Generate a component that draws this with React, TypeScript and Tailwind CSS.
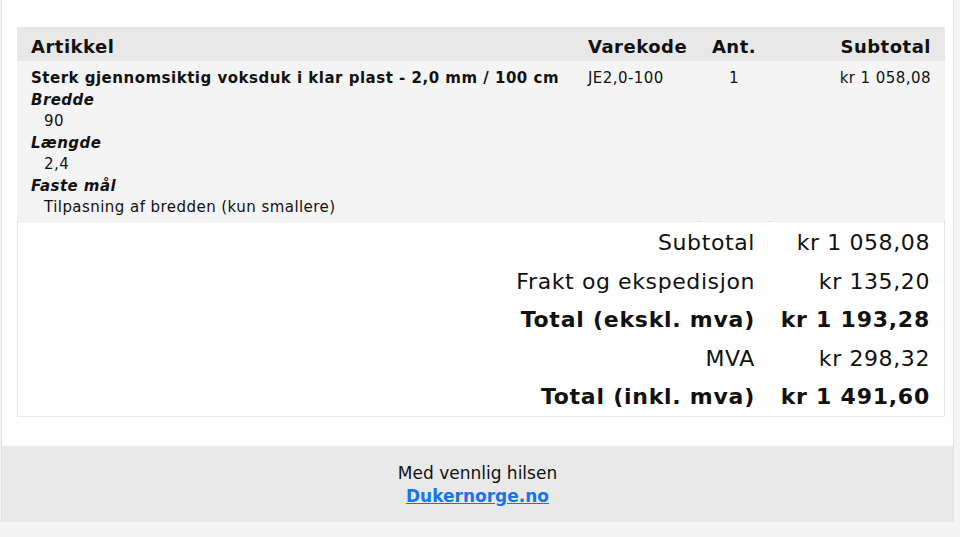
import React from 'react';

const font = { fontFamily: 'Verdana, "DejaVu Sans", sans-serif' };

const options = [
  { name: 'Bredde', value: '90' },
  { name: 'Længde', value: '2,4' },
  { name: 'Faste mål', value: 'Tilpasning af bredden (kun smallere)' },
];

const totals = [
  { label: 'Subtotal', value: 'kr 1 058,08', bold: false },
  { label: 'Frakt og ekspedisjon', value: 'kr 135,20', bold: false },
  { label: 'Total (ekskl. mva)', value: 'kr 1 193,28', bold: true },
  { label: 'MVA', value: 'kr 298,32', bold: false },
  { label: 'Total (inkl. mva)', value: 'kr 1 491,60', bold: true },
];

export default function App() {
  return (
    <div className="min-h-[537px] bg-[#f4f4f4] text-[#111]" style={font}>
      <div className="ml-px w-[953px] border-x border-[#e2e2e2] bg-white">
        <div className="px-[15px] pt-[27px] pb-[29px]">
          <table className="w-[928px] table-fixed border-collapse">
            <colgroup>
              <col className="w-[557px]" />
              <col className="w-[125px]" />
              <col className="w-[70px]" />
              <col className="w-[176px]" />
            </colgroup>
            <thead>
              <tr className="h-[34px] bg-[#e8e8e8] text-[18px] font-bold tracking-[0.5px]">
                <th className="pl-[14px] pt-[5px] text-left">Artikkel</th>
                <th className="pl-[14px] pt-[5px] text-left">Varekode</th>
                <th className="pt-[5px] text-center">Ant.</th>
                <th className="pr-[14px] pt-[5px] text-right">Subtotal</th>
              </tr>
            </thead>
            <tbody>
              <tr className="border-b border-dotted border-[#d8d8d8] bg-[#f4f4f4] align-top text-[15px] leading-[21.5px] tracking-[0.45px]">
                <td className="pl-[14px] pt-[7px] pb-[2px]">
                  <div className="font-bold tracking-[0.5px]">Sterk gjennomsiktig voksduk i klar plast - 2,0 mm / 100 cm</div>
                  {options.map(o => (
                    <div key={o.name}>
                      <div className="font-bold italic">{o.name}</div>
                      <div className="pl-[13px]">{o.value}</div>
                    </div>
                  ))}
                </td>
                <td className="pl-[14px] pt-[7px]">JE2,0-100</td>
                <td className="pt-[7px] text-center">1</td>
                <td className="pr-[14px] pt-[7px] text-right">kr 1 058,08</td>
              </tr>
            </tbody>
          </table>
          <div className="w-[928px] border-x border-b border-[#e6e6e6] pt-[2px]">
            {totals.map(t => (
              <div
                key={t.label}
                className={`flex h-[38.5px] items-center text-[22px] ${t.bold ? 'font-bold tracking-[0.75px]' : 'tracking-[0.6px]'}`}
              >
                <div className="w-[737px] text-right">{t.label}</div>
                <div className="w-[175px] text-right">{t.value}</div>
              </div>
            ))}
          </div>
        </div>
        <div className="flex h-[76px] flex-col items-center justify-center bg-[#e9e9e9] pt-[2px] text-[17px] leading-[23px]">
          <div>Med vennlig hilsen</div>
          <a href="#" className="font-bold text-[#1a73e8] underline">Dukernorge.no</a>
        </div>
      </div>
    </div>
  );
}
